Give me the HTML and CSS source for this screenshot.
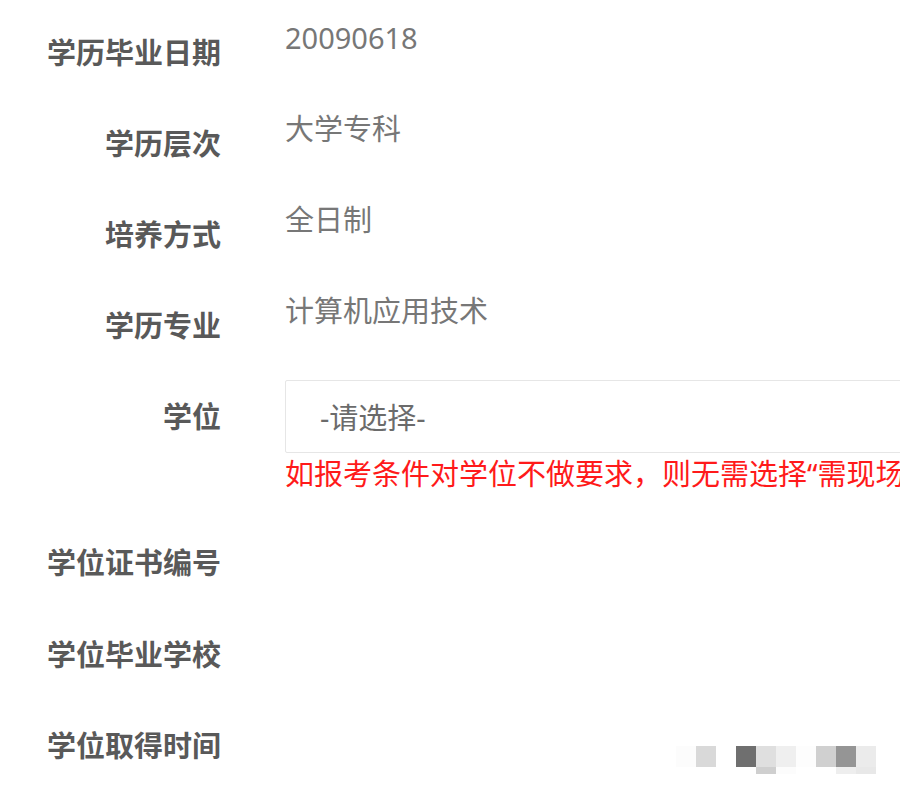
FILE: index.html
```html
<!DOCTYPE html>
<html lang="zh-CN">
<head>
  <meta charset="UTF-8" />
  <meta name="viewport" content="width=device-width,initial-scale=1" />
  <title>学历信息</title>
  <link rel="stylesheet" href="styles.css">
</head>
<body>

  <div class="form">
    <div class="row">
      <label>学历毕业日期</label>
      <div class="value">20090618</div>
    </div>
    <div class="row">
      <label>学历层次</label>
      <div class="value">大学专科</div>
    </div>
    <div class="row">
      <label>培养方式</label>
      <div class="value">全日制</div>
    </div>
    <div class="row">
      <label>学历专业</label>
      <div class="value">计算机应用技术</div>
    </div>
    <div class="row">
      <label>学位</label>
      <div class="field">
        <div class="select">-请选择-</div>
        <p class="tip">如报考条件对学位不做要求，则无需选择“需现场确认”</p>
      </div>
    </div>
    <div class="row">
      <label>学位证书编号</label>
      <div class="value"></div>
    </div>
    <div class="row">
      <label>学位毕业学校</label>
      <div class="value"></div>
    </div>
    <div class="row">
      <label>学位取得时间</label>
      <div class="value"></div>
    </div>
  </div>

  <!-- blurred watermark -->
  <div class="mosaic">
    <i style="background:#fcfcfc"></i><i style="background:#d9d9d9"></i><i></i><i style="background:#6f6f6f"></i><i style="background:#dfdfdf"></i><i style="background:#efefef"></i><i style="background:#fdfdfd"></i><i style="background:#d0d0d0"></i><i style="background:#959595"></i><i style="background:#ebebeb"></i>
    <i class="half"></i><i class="half"></i><i class="half"></i><i class="half"></i><i class="half" style="background:#cfcfcf"></i><i class="half" style="background:#fcfcfc"></i><i class="half"></i><i class="half"></i><i class="half" style="background:#eeeeee"></i><i class="half" style="background:#e8e8e8"></i>
  </div>

</body>
</html>
```

FILE: styles.css
```css
* { box-sizing: border-box; margin:0; padding:0 }
body {
  font-family: "Noto Sans", "Noto Sans CJK SC", sans-serif;
  background: #fff;
  width: 900px;
  height: 795px;
  overflow: hidden;
  position: relative;
}

.form {
  padding-top: 18px;
}

.row {
  display: flex;
  align-items: flex-start;
  margin-bottom: 36.6px;
}

.row label {
  width: 221px;
  flex-shrink: 0;
  text-align: right;
  padding-top: 14.5px;
  font-size: 29px;
  line-height: 40px;
  font-weight: bold;
  color: #595959;
}

.value {
  margin-left: 64px;
  font-size: 29px;
  line-height: 40px;
  color: #777;
  white-space: nowrap;
}

.field {
  margin-left: 64px;
  margin-top: -2px;
  margin-bottom: -3px;
  white-space: nowrap;
}

.select {
  width: 700px;
  height: 73px;
  border: 1px solid #e6e6e6;
  border-radius: 2px;
  padding-left: 34px;
  font-size: 29px;
  line-height: 73px;
  color: #6b6b6b;
}

.tip {
  font-size: 29px;
  line-height: 42px;
  color: #ff1a1a;
}

.mosaic {
  position: absolute;
  left: 676px;
  top: 746px;
  display: grid;
  grid-template-columns: repeat(10, 20px);
  grid-auto-rows: 21px 7px;
}

.mosaic i { display: block; background: #fff; }
```
